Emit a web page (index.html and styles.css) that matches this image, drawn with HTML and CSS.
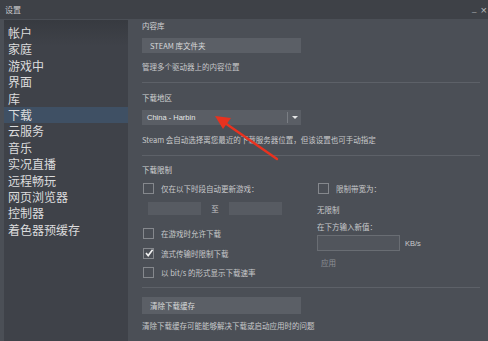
FILE: index.html
```html
<!DOCTYPE html>
<html lang="zh-CN">
<head>
<meta charset="UTF-8">
<title>设置</title>
<link rel="stylesheet" href="styles.css">
</head>
<body>
<div class="titlebar">
  <span class="title">设置</span>
  <span class="win-btns"><span class="min">_</span><span class="close">×</span></span>
</div>
<div class="window">
  <ul class="sidebar">
    <li>帐户</li>
    <li>家庭</li>
    <li>游戏中</li>
    <li>界面</li>
    <li>库</li>
    <li class="active">下载</li>
    <li>云服务</li>
    <li>音乐</li>
    <li>实况直播</li>
    <li>远程畅玩</li>
    <li>网页浏览器</li>
    <li>控制器</li>
    <li>着色器预缓存</li>
  </ul>

  <div class="main">
    <div class="heading">内容库</div>
    <div class="btn btn-lib">STEAM 库文件夹</div>
    <div class="desc gap9">管理多个驱动器上的内容位置</div>
    <div class="divider"></div>

    <div class="heading gap10">下载地区</div>
    <div class="select">
      <span class="select-text">China - Harbin</span>
      <span class="select-arrow"></span>
    </div>
    <div class="desc gap10">Steam 会自动选择离您最近的下载服务器位置，但该设置也可手动指定</div>
    <div class="divider"></div>

    <div class="heading gap9">下载限制</div>
    <div class="limits">
      <div class="col-left">
        <div class="check-row"><span class="box"></span>仅在以下时段自动更新游戏：</div>
        <div class="time-row">
          <span class="time-field"></span>
          <span class="to">至</span>
          <span class="time-field"></span>
        </div>
        <div class="check-row gap13"><span class="box"></span>在游戏时允许下载</div>
        <div class="check-row gap10"><span class="box checked"><svg width="10" height="10" viewBox="0 0 10 10"><polyline points="2,5 4.2,7.6 8.6,1.8" fill="none" stroke="#f2f2f2" stroke-width="1.6"/></svg></span>流式传输时限制下载</div>
        <div class="check-row gap9"><span class="box"></span>以 bit/s 的形式显示下载速率</div>
      </div>
      <div class="col-right">
        <div class="check-row"><span class="box"></span>限制带宽为：</div>
        <div class="desc gap12">无限制</div>
        <div class="desc gap7">在下方输入新值：</div>
        <div class="rate-row">
          <span class="rate-field"></span>
          <span class="unit">KB/s</span>
        </div>
        <div class="desc dim gap7">应用</div>
      </div>
    </div>
    <div class="divider gap14"></div>

    <div class="btn btn-clear">清除下载缓存</div>
    <div class="desc gap7">清除下载缓存可能能够解决下载或启动应用时的问题</div>
  </div>
</div>

<svg class="arrow" width="80" height="60" viewBox="0 0 80 60">
  <line x1="74" y1="51" x2="22" y2="15" stroke="#e8321f" stroke-width="2.4" stroke-linecap="round"/>
  <polygon points="12,8 28,10 20,21" fill="#e8321f"/>
</svg>
</body>
</html>
```

FILE: styles.css
```css
body {
  margin: 0;
  width: 488px;
  height: 341px;
  overflow: hidden;
  background-color: #4b4f56;
  font-family: "Noto Sans CJK SC", "Liberation Sans", sans-serif;
  color: #c8c9cb;
  position: relative;
}

.titlebar {
  height: 19px;
  background: #3e4147;
  display: flex;
  justify-content: space-between;
  align-items: center;
  padding: 0 0 0 5px;
}

.title {
  font-size: 8px;
  color: #c9cacc;
  line-height: 10px;
}

.win-btns {
  display: flex;
  gap: 4px;
  font-family: "Liberation Sans", sans-serif;
  color: #b8babd;
  margin-right: 1px;
}

.min {
  font-size: 8px;
  line-height: 8px;
}

.close {
  font-size: 11px;
  line-height: 10px;
}

.window {
  display: flex;
  height: 322px;
}

.sidebar {
  list-style: none;
  margin: 1px 0 0 4px;
  padding: 5px 0 0 0;
  width: 124px;
  background: linear-gradient(#373a40, #3f4249 26px, #3f4249);
}

.sidebar li {
  height: 16.4px;
  line-height: 16px;
  font-size: 12px;
  padding-left: 4px;
  color: #dcdcdd;
}

.sidebar li.active {
  background-color: #3f5064;
}

.main {
  flex: 1;
  padding: 2px 8px 0 14px;
  display: flex;
  flex-direction: column;
  align-items: flex-start;
}

.heading, .desc {
  font-size: 7.5px;
  line-height: 10px;
  white-space: nowrap;
}

.heading {
  color: #d2d3d5;
}

.desc.dim {
  color: #8e9196;
  margin-left: 4px;
}

.gap7 { margin-top: 7px; }
.gap9 { margin-top: 9px; }
.gap10 { margin-top: 10px; }
.gap12 { margin-top: 12px; }
.gap13 { margin-top: 13px; }
.gap14 { margin-top: 14px; }

.btn {
  width: 151px;
  background-color: #5b5f66;
  font-size: 7.5px;
  color: #d9dadb;
  padding-left: 8px;
  display: flex;
  align-items: center;
}

.btn-lib {
  margin-top: 7px;
  height: 15px;
}

.btn-clear {
  margin-top: 9px;
  height: 17px;
}

.divider {
  align-self: stretch;
  height: 1px;
  background-color: #5d6168;
  margin-top: 10px;
}

.select {
  margin-top: 7px;
  width: 159px;
  height: 15px;
  background-color: #5a5e65;
  display: flex;
  align-items: center;
  position: relative;
}

.select-text {
  flex: 1;
  font-family: "Liberation Sans", sans-serif;
  font-size: 7.5px;
  color: #e4e5e6;
  padding-left: 5px;
}

.select-arrow {
  width: 13px;
  height: 11px;
  border-left: 1px solid #7a7e84;
  position: relative;
}

.select-arrow::after {
  content: "";
  position: absolute;
  left: 4px;
  top: 4px;
  border-left: 3px solid transparent;
  border-right: 3px solid transparent;
  border-top: 3px solid #e4e5e6;
}

.limits {
  margin-top: 8px;
  display: flex;
}

.col-left {
  width: 175px;
  display: flex;
  flex-direction: column;
}

.col-right {
  display: flex;
  flex-direction: column;
}

.check-row {
  height: 10px;
  display: flex;
  align-items: center;
  font-size: 7.5px;
  color: #c8c9cb;
  white-space: nowrap;
}

.box {
  width: 9px;
  height: 9px;
  border: 1px solid #85888d;
  margin: 0 7px 0 1px;
  position: relative;
}

.box.checked svg {
  position: absolute;
  left: 0;
  top: -1px;
}

.time-row {
  margin-top: 9px;
  display: flex;
  align-items: center;
  padding-left: 6px;
}

.time-field {
  width: 53px;
  height: 13px;
  background-color: #575b62;
}

.to {
  width: 28px;
  text-align: center;
  font-size: 7.5px;
}

.rate-row {
  margin-top: 3px;
  display: flex;
  align-items: center;
  gap: 5px;
}

.rate-field {
  width: 81px;
  height: 14px;
  border: 1px solid #696d73;
  background-color: #51555c;
}

.unit {
  font-family: "Liberation Sans", sans-serif;
  font-size: 7.5px;
}

.arrow {
  position: absolute;
  left: 203px;
  top: 108px;
}
```
